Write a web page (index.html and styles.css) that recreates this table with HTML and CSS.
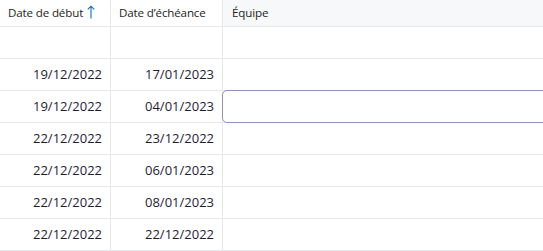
FILE: index.html
```html
<!DOCTYPE html>
<html lang="fr">
<head>
<meta charset="utf-8">
<link rel="stylesheet" href="styles.css">
</head>
<body>
<div class="grid">
  <div class="hcell"><span>Date de début</span><svg class="sort" width="8" height="14" viewBox="0 0 8 14"><path d="M4 1.2V13.5M0.8 4.4L4 1.2L7.2 4.4" fill="none" stroke="#0f6cbd" stroke-width="1.1"/></svg></div>
  <div class="hcell">Date d’échéance</div>
  <div class="hcell last alt">Équipe</div>

  <div class="cell"></div><div class="cell"></div><div class="cell last"></div>
  <div class="cell">19/12/2022</div><div class="cell">17/01/2023</div><div class="cell last"></div>
  <div class="cell">19/12/2022</div><div class="cell">04/01/2023</div><div class="cell last"></div>
  <div class="cell">22/12/2022</div><div class="cell">23/12/2022</div><div class="cell last"></div>
  <div class="cell">22/12/2022</div><div class="cell">06/01/2023</div><div class="cell last"></div>
  <div class="cell">22/12/2022</div><div class="cell">08/01/2023</div><div class="cell last"></div>
  <div class="cell">22/12/2022</div><div class="cell">22/12/2022</div><div class="cell last"></div>
</div>
<div class="editor"></div>
</body>
</html>
```
FILE: styles.css
```css
html, body {
  margin: 0;
  padding: 0;
  background: #ffffff;
  overflow: hidden;
}
body {
  position: relative;
  width: 543px;
  height: 251px;
  font-family: "Open Sans", "Noto Sans", sans-serif;
}
.grid {
  display: grid;
  grid-template-columns: 111px 112px 1fr;
  grid-template-rows: 27px repeat(7, 32px);
}
.hcell {
  display: flex;
  align-items: center;
  gap: 4px;
  padding: 0 8px 1px 8px;
  font-size: 11.6px;
  letter-spacing: -0.15px;
  color: #242424;
  border-right: 1px solid #e6e7ef;
  border-bottom: 1px solid #e6e7ef;
}
.hcell.alt {
  background: #f7f8fa;
  padding-left: 9px;
}
.sort {
  display: block;
  margin-top: -1px;
}
.cell {
  display: flex;
  align-items: center;
  justify-content: flex-end;
  padding: 0 8px 1px 8px;
  font-size: 13px;
  color: #1c1e36;
  border-right: 1px solid #e6e7ef;
  border-bottom: 1px solid #e6e7ef;
}
.last {
  border-right: none;
}
.editor {
  position: absolute;
  left: 222px;
  top: 90px;
  width: 330px;
  height: 31px;
  border: 1px solid #8a94b6;
  border-radius: 5px;
  background: #ffffff;
}
```
